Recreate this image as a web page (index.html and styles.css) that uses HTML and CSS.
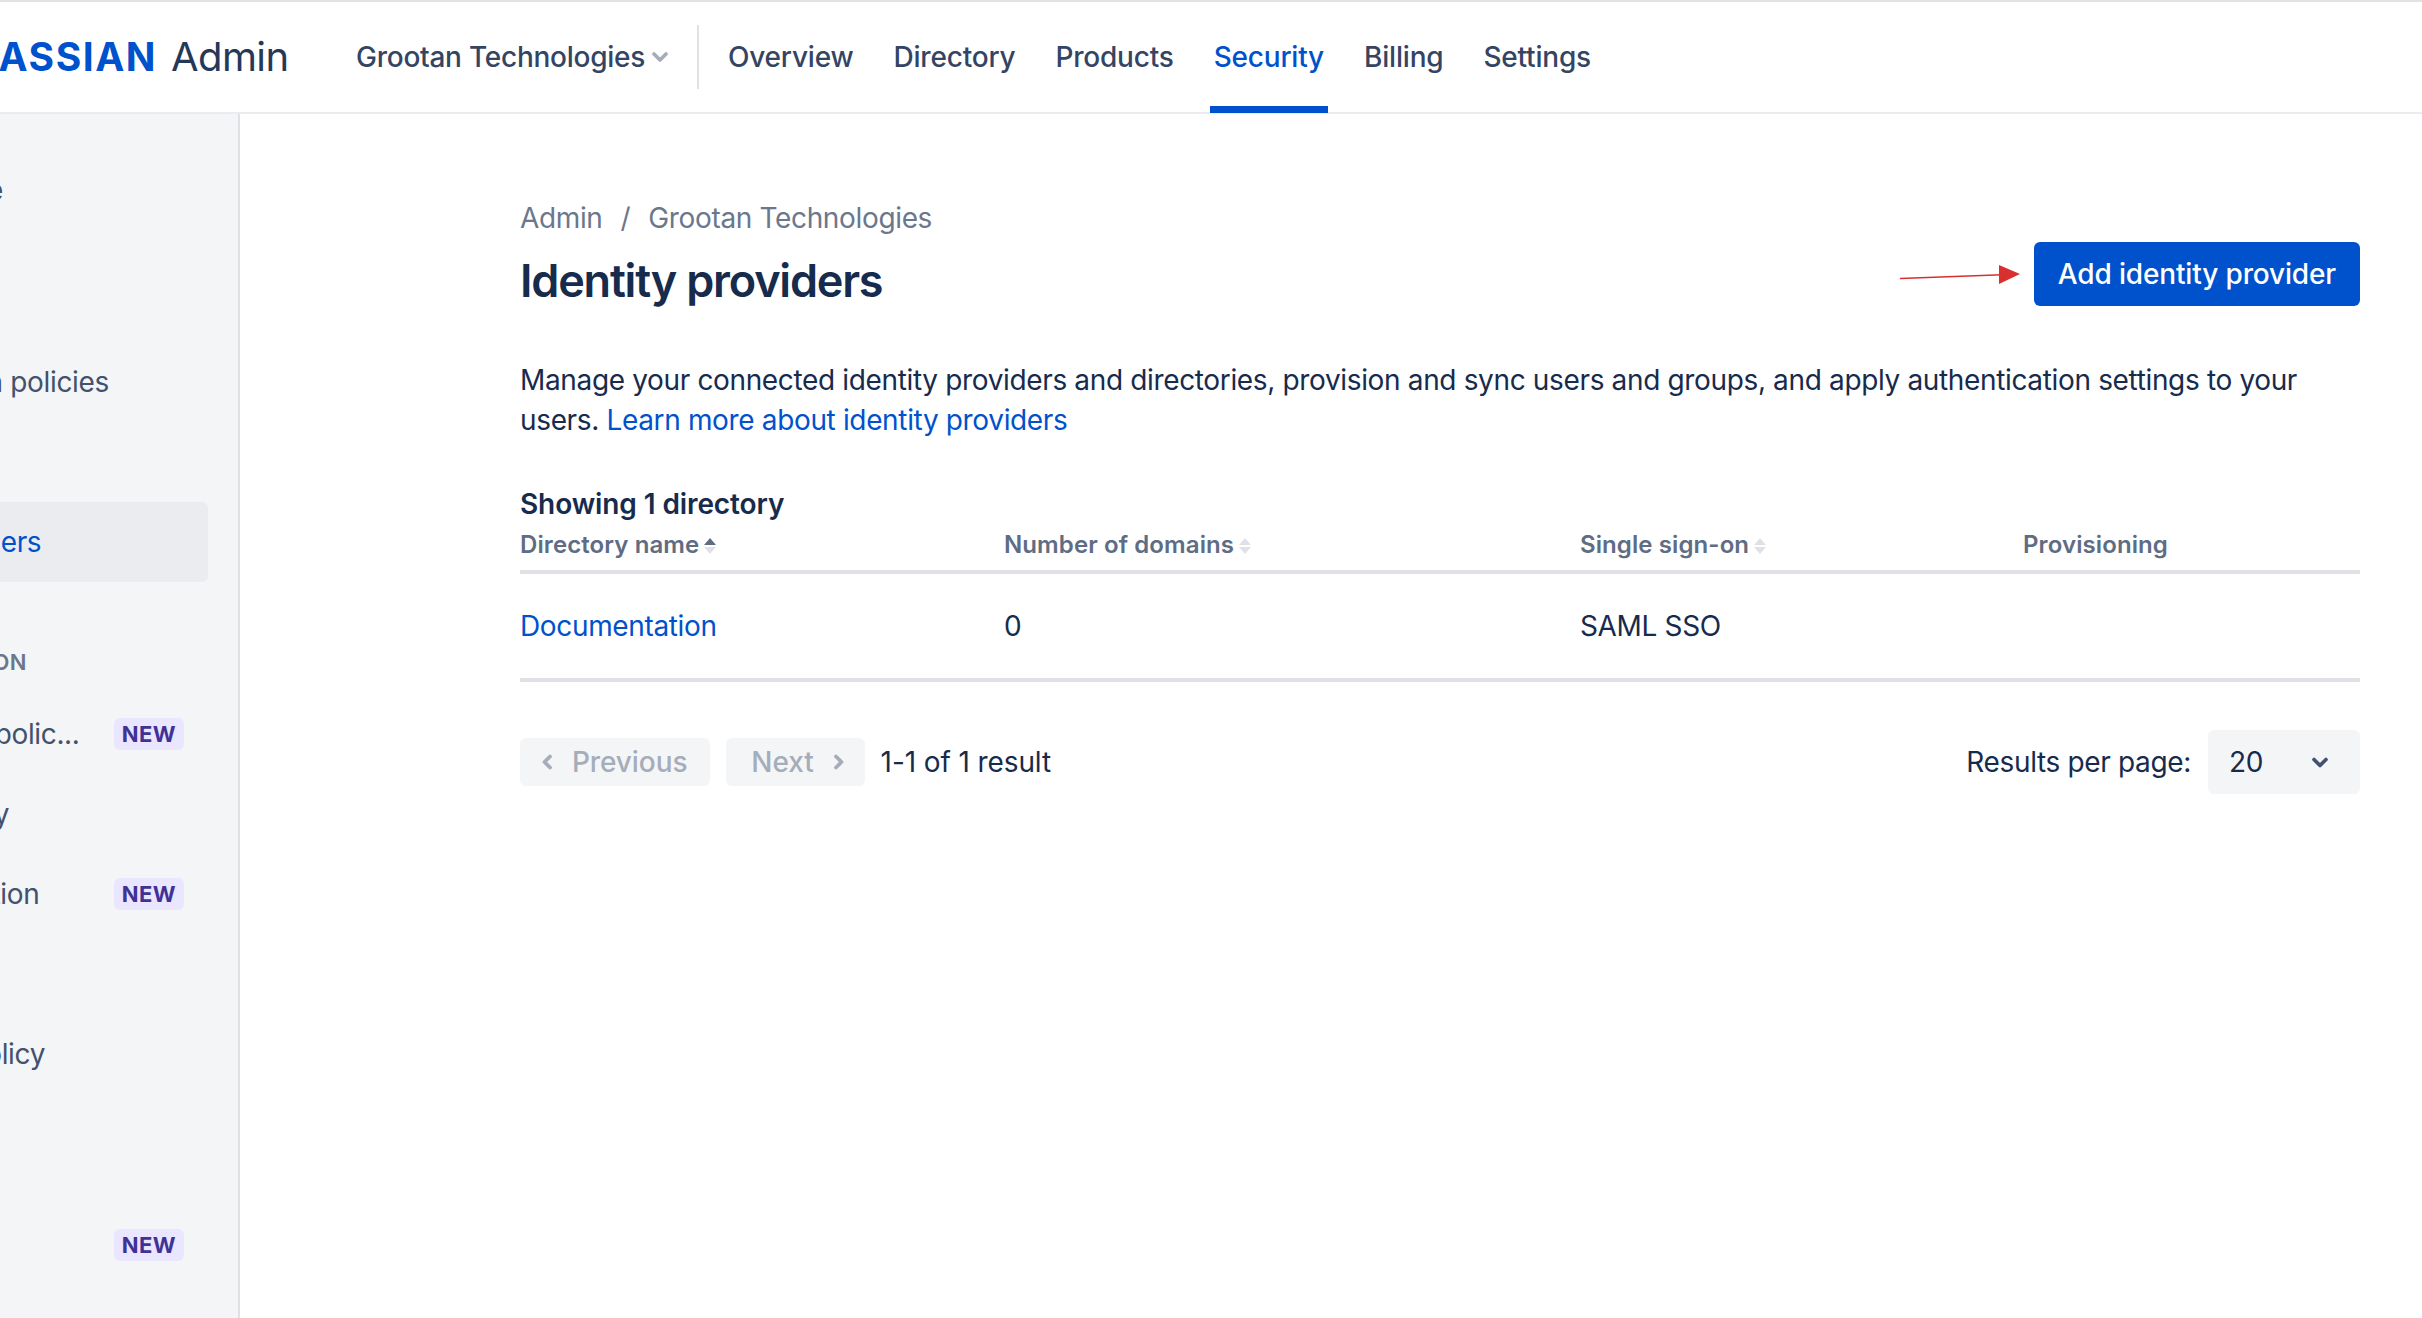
FILE: index.html
```html
<!DOCTYPE html>
<html lang="en">
<head>
  <meta charset="UTF-8">
  <title>Identity providers - Atlassian Admin</title>
  <link rel="stylesheet" href="styles.css">
</head>
<body>
  <header class="topbar">
    <div class="brand">
      <div class="brand-clip"><span class="brand-mark">ATLASSIAN</span></div>
      <span class="brand-name">Admin</span>
    </div>
    <button class="org-switch">
      Grootan Technologies
      <svg class="org-chevron" width="16" height="10" viewBox="0 0 16 10"><path d="M2 2l6 6 6-6" fill="none" stroke="#a5adba" stroke-width="3.6" stroke-linecap="round" stroke-linejoin="round"/></svg>
    </button>
    <div class="nav-divider"></div>
    <nav class="topnav">
      <a href="#">Overview</a>
      <a href="#">Directory</a>
      <a href="#">Products</a>
      <a href="#" class="active">Security</a>
      <a href="#">Billing</a>
      <a href="#">Settings</a>
    </nav>
  </header>

  <div class="layout">
    <aside class="sidebar">
      <ul class="side-list">
        <li class="side-item">Security guide</li>
        <li class="side-item gap-lg">Authentication policies</li>
        <li class="side-item"></li>
        <li class="side-item active"><span>Identity providers</span></li>
        <li class="side-heading">DATA PROTECTION</li>
        <li class="side-item">Data security polic...<span class="badge">NEW</span></li>
        <li class="side-item">Data residency</li>
        <li class="side-item">Data tokenization<span class="badge">NEW</span></li>
        <li class="side-item"></li>
        <li class="side-item">Web usage policy</li>
        <li class="side-item"></li>
        <li class="side-item gap-sm"><span class="badge">NEW</span></li>
      </ul>
    </aside>

    <main class="content">
      <div class="page-head">
        <div>
          <div class="breadcrumbs">
            <a href="#">Admin</a>
            <span class="crumb-sep">/</span>
            <a href="#">Grootan Technologies</a>
          </div>
          <h1>Identity providers</h1>
        </div>
        <div class="page-actions">
          <svg width="120" height="20" viewBox="0 0 120 20"><path d="M0 14.5L102 10.8" stroke="#d92f2f" stroke-width="1.6" fill="none"/><path d="M99 1l21 9-21 10z" fill="#d92f2f"/></svg>
          <button class="btn-primary">Add identity provider</button>
        </div>
      </div>

      <p class="intro">Manage your connected identity providers and directories, provision and sync users and groups, and apply authentication settings to your users. <a href="#">Learn more about identity providers</a></p>

      <div class="count">Showing 1 directory</div>
      <table class="dir-table">
        <thead>
          <tr>
            <th class="col-name">Directory name<span class="sort asc"></span></th>
            <th class="col-domains">Number of domains<span class="sort"></span></th>
            <th class="col-sso">Single sign-on<span class="sort"></span></th>
            <th>Provisioning</th>
          </tr>
        </thead>
        <tbody>
          <tr>
            <td><a href="#">Documentation</a></td>
            <td>0</td>
            <td>SAML SSO</td>
            <td></td>
          </tr>
        </tbody>
      </table>

      <div class="pager">
        <button class="btn-page prev" disabled>
          <svg width="12" height="16" viewBox="0 0 12 16"><path d="M9 2.500L3.500 8 9 13.500" fill="none" stroke="#a5adba" stroke-width="3.800" stroke-linecap="round" stroke-linejoin="round"/></svg>
          Previous
        </button>
        <button class="btn-page next" disabled>
          Next
          <svg width="12" height="16" viewBox="0 0 12 16"><path d="M3 2.500L8.500 8 3 13.500" fill="none" stroke="#a5adba" stroke-width="3.800" stroke-linecap="round" stroke-linejoin="round"/></svg>
        </button>
        <span class="pager-info">1-1 of 1 result</span>
        <label class="per-page">
          Results per page:
          <span class="per-select">
            20
            <svg width="16" height="11" viewBox="0 0 16 11"><path d="M2 2.500l6 6 6-6" fill="none" stroke="#42526e" stroke-width="3.600" stroke-linecap="round" stroke-linejoin="round"/></svg>
          </span>
        </label>
      </div>
    </main>
  </div>
</body>
</html>
```

FILE: styles.css
```css
* {
  box-sizing: border-box;
}
html, body {
  height: 100%;
}
body {
  margin: 0;
  font-family: Inter, "Noto Sans", sans-serif;
  font-size: 28px;
  line-height: 40px;
  letter-spacing: -0.35px;
  color: #172b4d;
  background: #fff;
  overflow: hidden;
}
a {
  color: #0052cc;
  text-decoration: none;
}
button {
  font: inherit;
  letter-spacing: inherit;
  border: 0;
}

/* top bar */
.topbar {
  display: flex;
  align-items: stretch;
  height: 114px;
  border-top: 2px solid #e2e2e2;
  border-bottom: 2px solid #ebecf0;
}
.brand {
  display: flex;
  align-items: center;
  width: 356px;
}
.brand-clip {
  display: flex;
  justify-content: flex-end;
  width: 157px;
  overflow: hidden;
}
.brand-mark {
  font-size: 39px;
  font-weight: 700;
  letter-spacing: 1.5px;
  color: #0052cc;
  white-space: nowrap;
}
.brand-name {
  margin-left: 14px;
  font-size: 40px;
  letter-spacing: -0.6px;
  color: #253858;
}
.org-switch {
  display: flex;
  align-items: center;
  gap: 7px;
  width: 341px;
  padding: 0;
  background: none;
  font-weight: 500;
  letter-spacing: -0.25px;
  color: #344563;
}
.nav-divider {
  width: 2px;
  height: 64px;
  margin-top: 23px;
  background: #dfe1e6;
}
.topnav {
  display: flex;
  gap: 32px;
  padding-left: 25px;
}
.topnav a {
  display: flex;
  align-items: center;
  padding: 0 4px;
  font-weight: 500;
  letter-spacing: -0.2px;
  color: #344563;
  white-space: nowrap;
}
.topnav a.active {
  color: #0052cc;
  box-shadow: inset 0 -6px 0 #0052cc, 0 1px 0 #0052cc;
}

/* left rail */
.layout {
  display: flex;
  height: calc(100% - 114px);
}
.sidebar {
  flex: none;
  width: 240px;
  background: #f4f5f7;
  border-right: 2px solid #dfe1e6;
  overflow: hidden;
}
.side-list {
  list-style: none;
  width: 392px;
  margin: 36px 0 0 -184px;
  padding: 0;
}
.side-item {
  display: flex;
  align-items: center;
  justify-content: space-between;
  height: 80px;
  padding-right: 24px;
  color: #42526e;
  white-space: nowrap;
}
.side-item.gap-lg {
  margin-top: 112px;
}
.side-item.gap-sm {
  margin-top: 31px;
  justify-content: flex-end;
}
.side-item.active {
  background: #ebecf0;
  border-radius: 6px;
  color: #0052cc;
}
.side-heading {
  margin-top: 60px;
  height: 40px;
  font-size: 22px;
  font-weight: 600;
  letter-spacing: 0.3px;
  color: #6b778c;
  white-space: nowrap;
}
.side-heading + .side-item {
  margin-top: 12px;
}
.badge {
  height: 32px;
  padding: 0 8px;
  line-height: 32px;
  background: #eae6ff;
  border-radius: 6px;
  font-size: 22px;
  font-weight: 700;
  letter-spacing: 0.4px;
  color: #403294;
}

/* page body */
.content {
  flex: 1;
  min-width: 0;
  padding: 84px 62px 0 280px;
}
.page-head {
  display: flex;
  justify-content: space-between;
  align-items: flex-start;
}
.breadcrumbs {
  display: flex;
  gap: 18px;
}
.breadcrumbs a,
.crumb-sep {
  color: #6b778c;
}
h1 {
  margin: 15px 0 0;
  font-size: 45px;
  line-height: 56px;
  font-weight: 600;
  letter-spacing: -1.2px;
  color: #172b4d;
}
.page-actions {
  display: flex;
  align-items: center;
  gap: 14px;
  margin-top: 44px;
}
.btn-primary {
  height: 64px;
  padding: 0 24px;
  background: #0052cc;
  border-radius: 6px;
  font-weight: 500;
  letter-spacing: -0.15px;
  color: #fff;
}
.intro {
  margin: 51px 0 0;
}
.count {
  margin-top: 44px;
  font-weight: 600;
  letter-spacing: -0.1px;
}

/* directory table */
.dir-table {
  width: 100%;
  border-collapse: separate;
  border-spacing: 0;
  table-layout: fixed;
}
.dir-table th {
  padding: 5px 0 9px;
  border-bottom: 4px solid #dfe1e6;
  text-align: left;
  font-size: 24px;
  line-height: 32px;
  font-weight: 600;
  letter-spacing: 0.1px;
  color: #5e6c84;
}
.dir-table td {
  height: 108px;
  padding: 0;
  border-bottom: 4px solid #dfe1e6;
}
.col-name {
  width: 484px;
}
.col-domains {
  width: 576px;
}
.col-sso {
  width: 443px;
}
/* stacked sort triangles, built from borders */
.sort {
  display: inline-block;
  position: relative;
  width: 12px;
  height: 16px;
  margin-left: 5px;
  vertical-align: -1px;
}
.sort::before,
.sort::after {
  content: "";
  position: absolute;
  left: 0;
  border-left: 6px solid transparent;
  border-right: 6px solid transparent;
}
.sort::before {
  top: 0;
  border-bottom: 7px solid #dfe1e6;
}
.sort::after {
  bottom: 0;
  border-top: 7px solid #dfe1e6;
}
.sort.asc::before {
  border-bottom-color: #5e6c84;
}

/* pagination */
.pager {
  display: flex;
  align-items: center;
  height: 64px;
  margin-top: 48px;
}
.btn-page {
  display: flex;
  align-items: center;
  gap: 19px;
  height: 48px;
  margin-right: 16px;
  background: #f4f5f7;
  border-radius: 6px;
  font-weight: 500;
  letter-spacing: -0.1px;
  color: #a5adba;
}
.btn-page.prev {
  padding: 0 23px 0 21px;
}
.btn-page.next {
  padding: 0 20px 0 25px;
}
.pager-info {
  letter-spacing: -0.1px;
}
.per-page {
  display: flex;
  align-items: center;
  gap: 17px;
  margin-left: auto;
}
.per-select {
  display: flex;
  align-items: center;
  justify-content: space-between;
  width: 152px;
  height: 64px;
  padding: 0 32px 0 21px;
  background: #f4f5f7;
  border-radius: 6px;
}
```
